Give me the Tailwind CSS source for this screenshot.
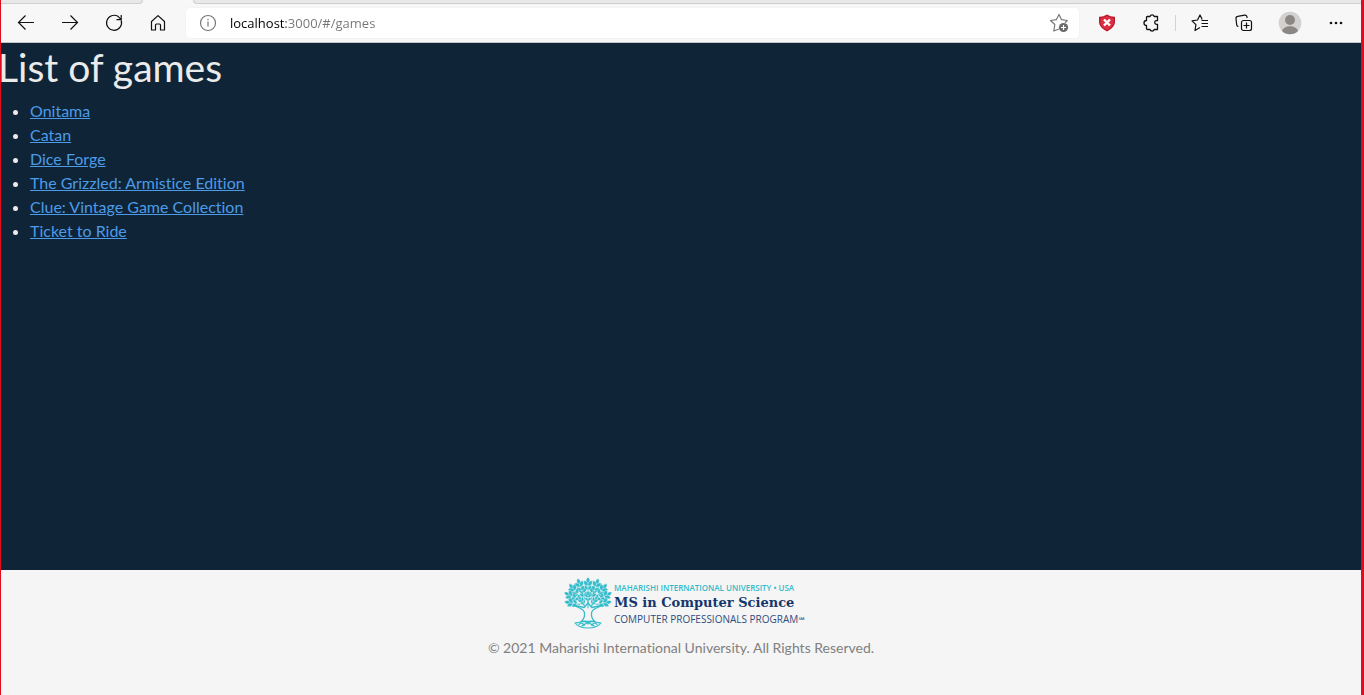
<!DOCTYPE html>
<html lang="en">
<head>
<meta charset="utf-8">
<meta name="viewport" content="width=device-width, initial-scale=1">
<title>List of games</title>
<script src="https://cdn.jsdelivr.net/npm/@tailwindcss/browser@4"></script>
</head>
<body class="flex min-h-screen flex-col overflow-x-hidden border-r-3 border-l border-[#e00b1c] bg-[#0f2537] font-['Lato',sans-serif] text-base text-[#ebebeb] [font-variant-ligatures:none]">
  <header class="border-b border-[#c4c4c4] bg-[#f7f7f7] text-[#111]">
    <div class="flex h-1 gap-[50px]">
      <div class="w-[142px] rounded-br border-r border-b border-[#cfcfcf] bg-[#e8e8e8]"></div>
      <div class="flex-1 rounded-bl border-b border-l border-[#cfcfcf] bg-[#e8e8e8]"></div>
    </div>
    <div class="flex h-[38px] items-center pr-[15px] pl-4">
      <nav class="flex gap-6" aria-label="Navigation">
        <button aria-label="Back"><svg class="size-5" viewBox="0 0 20 20" fill="none" stroke="currentColor" stroke-width="1.2"><path d="M17 9.5H1.500M8.500 2.500l-7 7 7 7"/></svg></button>
        <button aria-label="Forward"><svg class="size-5" viewBox="0 0 20 20" fill="none" stroke="currentColor" stroke-width="1.2"><path d="M1 9.500h15.500M9.500 2.500l7 7-7 7"/></svg></button>
        <button aria-label="Refresh"><svg class="size-5" viewBox="0 0 20 20" fill="none" stroke="currentColor" stroke-width="1.2"><path d="M16.200 7.500A7.500 7.500 0 1 1 13.300 3.600L16 6.300M16.200 2v4.600h-4.700"/></svg></button>
        <button aria-label="Home"><svg class="size-5" viewBox="0 0 20 20" fill="none" stroke="currentColor" stroke-width="1.2" stroke-linejoin="round"><path d="M2.500 8.500L9 2.600l6.500 5.900v8.500h-4v-5a1 1 0 0 0-1-1h-3a1 1 0 0 0-1 1v5h-4z"/></svg></button>
      </nav>
      <div class="ml-[17px] flex h-[30px] flex-1 items-center rounded bg-white px-[13px] shadow-[0_0_2px_#0001]">
        <svg class="size-[18px] text-[#777]" viewBox="0 0 18 18" fill="none" stroke="currentColor" stroke-width="1.200"><circle cx="9" cy="9" r="7.500"/><path d="M9 7.500v5M9 4.800v1.400"/></svg>
        <input type="text" aria-label="Address" value="localhost:3000/#/games" class="ml-[13px] min-w-0 flex-1 bg-linear-to-r from-black from-[56px] to-[#757575] to-[56px] bg-clip-text pt-0.5 font-['Open_Sans',sans-serif] text-[13px] text-transparent outline-none">
        <button aria-label="Add to favorites" class="-mr-[3px]"><svg class="size-5" viewBox="0 0 20 20" fill="none"><path d="M10 16l-5.200 2 1-6.500L1.500 7.500l5.800-.8L10 1.500l2.500 5.200 5.800.8-2.300 2.200" stroke="#777" stroke-width="1.200" stroke-linejoin="round"/><circle cx="14.500" cy="14.500" r="4.600" fill="#6b6b6b"/><path d="M14.500 12v5M12 14.500h5" stroke="#fff" stroke-width="1.200"/></svg></button>
      </div>
      <div class="ml-[18px] flex items-center">
        <button aria-label="Blocker"><svg class="size-5" viewBox="0 0 20 20"><path d="M10 1.500q4 2.500 8 2.200v5c0 4.500-3.500 7-8 9.800-4.500-2.800-8-5.300-8-9.800v-5q4 .3 8-2.200z" fill="#b91931"/><path d="M10 3q3.200 1.900 6.600 1.900v4c0 3.600-2.800 5.700-6.600 8-3.800-2.300-6.600-4.400-6.600-8v-4Q6.800 4.900 10 3z" fill="#de2f42"/><path d="M7 6.500l6 6m0-6l-6 6" stroke="#fff" stroke-width="2.400"/></svg></button>
        <button aria-label="Extensions" class="ml-6"><svg class="size-5" viewBox="0 0 20 20" fill="none" stroke="currentColor" stroke-width="1.300" stroke-linejoin="round"><path d="M6.500 3.500H9a2.200 2.200 0 0 1 4.200 0h3.300v4.200h-1a1.800 1.800 0 0 0 0 3.600h1v5.200h-3.300a2.200 2.200 0 0 1-4.200 0H6.500a1 1 0 0 1-1-1v-3a2.500 2.500 0 0 1 0-5v-3a1 1 0 0 1 1-1z"/></svg></button>
        <div class="ml-[14px] h-4 w-px bg-[#d3d3d3]"></div>
        <button aria-label="Favorites" class="ml-[14px]"><svg class="size-5" viewBox="0 0 20 20" fill="none" stroke="currentColor" stroke-width="1.200" stroke-linejoin="round"><path d="M10 14.500L5 17.500l.9-5.800L2 7.800l5.500-.8L10 2l2.200 4.500M11.500 7.500H18M11.500 10.500H18M11.500 13.500H18"/></svg></button>
        <button aria-label="Collections" class="ml-6"><svg class="size-5" viewBox="0 0 20 20" fill="none" stroke="currentColor" stroke-width="1.200"><path d="M4.500 13.500a2 2 0 0 1-1.800-1.700L2 5.500a2 2 0 0 1 1.700-2.200l7-1.200a2 2 0 0 1 2.200 1.500l.3 1.400"/><rect x="7.500" y="7.500" width="10" height="10" rx="2"/><path d="M12.500 9.500v6M9.500 12.500h6"/></svg></button>
        <button aria-label="Profile" class="ml-6"><svg class="size-6" viewBox="0 0 24 24"><circle cx="12" cy="12" r="11.300" fill="#d3d1cf"/><circle cx="12" cy="9" r="5" fill="#8b8785"/><path d="M4 20c1.500-6.500 14.500-6.500 16 0a11.300 11.300 0 0 1-16 0z" fill="#8b8785"/></svg></button>
        <button aria-label="Settings and more" class="ml-6"><svg class="size-5" viewBox="0 0 20 20" fill="currentColor"><circle cx="5" cy="10" r="1.300"/><circle cx="10" cy="10" r="1.300"/><circle cx="15" cy="10" r="1.300"/></svg></button>
      </div>
    </div>
  </header>

  <main class="flex-1">
    <h1 class="-ml-[3px] mb-2 text-[39px] leading-12">List of games</h1>
    <ul class="list-disc pl-[29px] leading-6 [&_a]:text-[#4c9be8] [&_a]:underline">
      <li><a href="#/games/1">Onitama</a></li>
      <li><a href="#/games/2">Catan</a></li>
      <li><a href="#/games/3">Dice Forge</a></li>
      <li><a href="#/games/4">The Grizzled: Armistice Edition</a></li>
      <li><a href="#/games/5">Clue: Vintage Game Collection</a></li>
      <li><a href="#/games/6">Ticket to Ride</a></li>
    </ul>
  </main>

  <footer class="flex flex-col items-center bg-[#f5f5f5] pt-[7px] pb-9">
    <div class="flex gap-0.5">
      <svg class="h-[52px] w-[50px]" viewBox="0 0 50 52" fill="none" stroke="#31bccb" stroke-linecap="round" aria-hidden="true">
        <defs>
          <path id="leaf" d="M0 0C-2.600-2-2.300-5 0-6.800 2.300-5 2.600-2 0 0z" fill="#31bccb" stroke="#f5f5f5" stroke-width=".4"/>
          <g id="spray"><path d="M0 8V-3" stroke-width=".9"/><use href="#leaf" y="-1"/><use href="#leaf" transform="translate(0 1) rotate(-38)"/><use href="#leaf" transform="translate(0 1) rotate(38)"/><use href="#leaf" transform="translate(0 5) rotate(-40) scale(.85)"/><use href="#leaf" transform="translate(0 5) rotate(40) scale(.85)"/></g>
        </defs>
        <g transform="translate(1 0)">
          <use href="#spray" transform="translate(20 15) rotate(-15)"/><use href="#spray" transform="translate(30 15) rotate(15)"/>
          <use href="#spray" transform="translate(13 19) rotate(-42) scale(.9)"/><use href="#spray" transform="translate(37 19) rotate(42) scale(.9)"/>
          <use href="#spray" transform="translate(19 24) rotate(-35) scale(.7)"/><use href="#spray" transform="translate(31 24) rotate(35) scale(.7)"/>
          <use href="#spray" transform="translate(25 20) scale(.75)"/>
          <use href="#spray" transform="translate(25 8)"/>
          <use href="#spray" transform="translate(17 9) rotate(-18)"/><use href="#spray" transform="translate(33 9) rotate(18)"/>
          <use href="#spray" transform="translate(11 13) rotate(-38)"/><use href="#spray" transform="translate(39 13) rotate(38)"/>
          <use href="#spray" transform="translate(8 19) rotate(-62)"/><use href="#spray" transform="translate(42 19) rotate(62)"/>
          <use href="#spray" transform="translate(9 26) rotate(-80)"/><use href="#spray" transform="translate(41 26) rotate(80)"/>
          <path d="M10 28c5 3 11 3 11.500 8 .3 4-.5 6.500-3.500 8.500h14c-3-2-3.800-4.500-3.500-8.500.5-5 6.500-5 11.500-8-5 1-9 2-11 2.500L25 26l-4 4.500c-2-.5-6-1.500-11-2.500z" fill="#f5f5f5" stroke-width="1.300" stroke-linejoin="round"/>
          <path d="M25 31v-8M22 30l-4-6M28 30l4-6" stroke-width="1"/>
          <path d="M12 46q6-.5 8-2M38 46q-6-.500-8-2M12 46q4 5 13 5t13-5M16 47.500q3-3 5 1 2-3 4-3t4 3q2-4 5-1M22 44l3 3 3-3M19 49l2-2M31 49l-2-2" stroke-width="1.100"/>
        </g>
      </svg>
      <div class="w-[186px] pt-[5px] whitespace-nowrap text-[#2f4d80]">
        <p class="font-['Open_Sans',sans-serif] text-[8px] leading-3 font-semibold text-[#31bccb]">MAHARISHI INTERNATIONAL UNIVERSITY • USA</p>
        <p class="font-['DejaVu_Serif',serif] text-[13px] leading-[17px] font-bold text-[#15366b]">MS in Computer Science</p>
        <p class="font-['Open_Sans',sans-serif] text-[10px] leading-4">COMPUTER PROFESSIONALS PROGRAM<span class="text-[8px]">℠</span></p>
      </div>
    </div>
    <p class="mt-2 text-sm leading-[22px] text-[#808080]">© 2021 Maharishi International University. All Rights Reserved.</p>
  </footer>
</body>
</html>
